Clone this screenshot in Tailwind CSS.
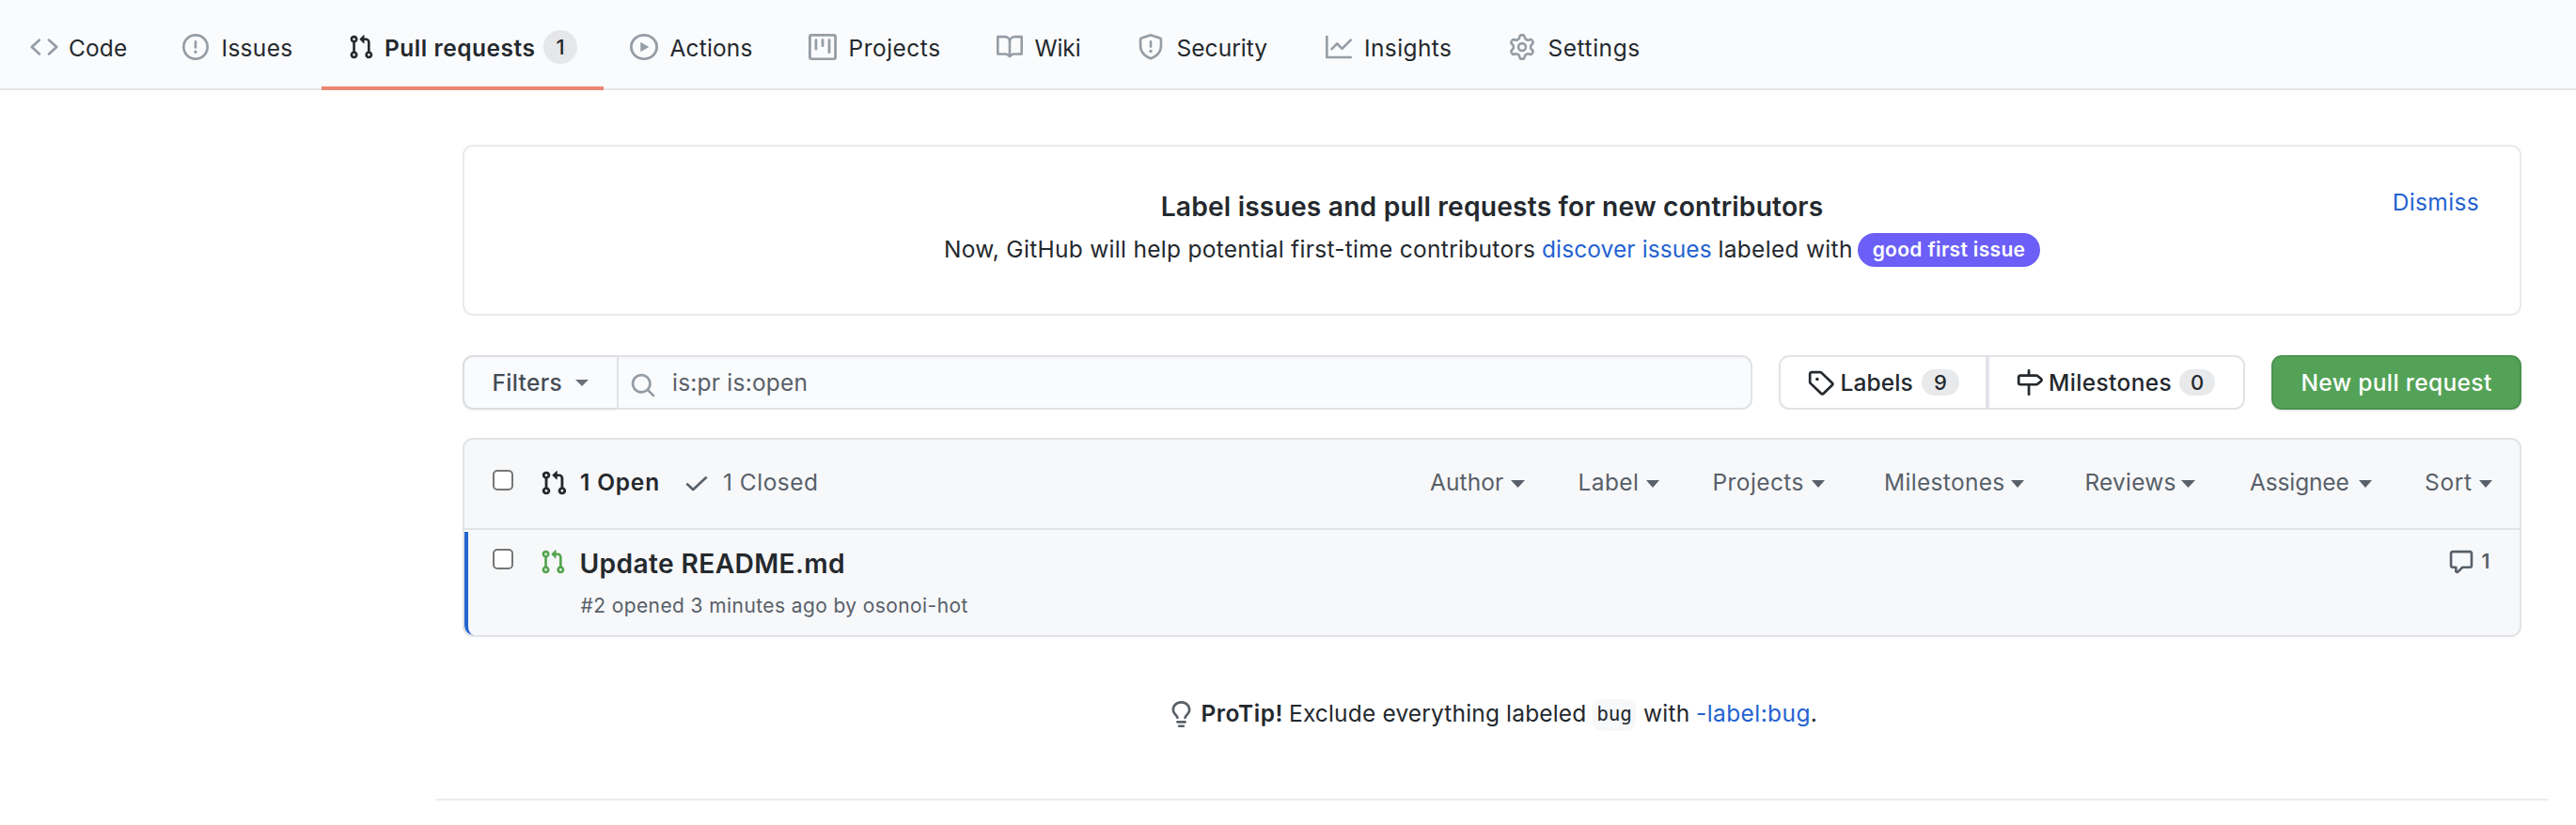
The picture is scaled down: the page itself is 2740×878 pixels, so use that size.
<!DOCTYPE html>
<html lang="en">
<head>
<meta charset="utf-8">
<title>Pull requests</title>
<script src="https://cdn.jsdelivr.net/npm/@tailwindcss/browser@4"></script>
</head>
<body class="bg-white text-[#24292e] font-['Inter',sans-serif] text-[24.5px] leading-[30px] whitespace-nowrap overflow-hidden">

<!-- Shared icon shapes -->
<svg class="hidden">
  <symbol id="pr" viewBox="0 0 16 16" preserveAspectRatio="none"><path fill-rule="evenodd" d="M7.177 3.073L9.573.677A.25.25 0 0110 .854v4.792a.25.25 0 01-.427.177L7.177 3.427a.25.25 0 010-.354zM3.75 2.5a.75.75 0 100 1.5.75.75 0 000-1.5zm-2.25.75a2.25 2.25 0 113 2.122v5.256a2.251 2.251 0 11-1.5 0V5.372A2.25 2.25 0 011.5 3.25zM11 2.5h-1V4h1a1 1 0 011 1v5.628a2.251 2.251 0 101.5 0V5A2.5 2.5 0 0011 2.5zm1 10.25a.75.75 0 111.5 0 .75.75 0 01-1.5 0zM3.75 12a.75.75 0 100 1.5.75.75 0 000-1.5z"/></symbol>
  <symbol id="caret" viewBox="0 0 14 8" preserveAspectRatio="none"><path d="M0 0h14L7 8z"/></symbol>
</svg>

<header class="h-24 bg-[#fafbfd] border-b-2 border-[#e4e6e9]">
  <nav class="flex items-start h-24">
    <a class="flex items-start pt-9 pl-8 w-[193.5px]">
      <svg class="w-[30px] h-7 shrink-0 fill-[#959da5]" viewBox="0 0 16 16" preserveAspectRatio="none"><path d="M4.72 3.22a.75.75 0 011.06 1.06L2.06 8l3.72 3.72a.75.75 0 11-1.06 1.06L.47 8.53a.75.75 0 010-1.06l4.25-4.25zm6.56 0a.75.75 0 10-1.06 1.06L13.94 8l-3.72 3.72a.75.75 0 101.06 1.06l4.25-4.25a.75.75 0 000-1.06l-4.25-4.25z"/></svg>
      <span class="ml-[11px] tracking-[0.1px]">Code</span>
    </a>
    <a class="flex items-start pt-9 w-[148.5px]">
      <svg class="size-7 shrink-0 fill-[#959da5]" viewBox="0 0 16 16"><path fill-rule="evenodd" d="M8 1.5a6.5 6.5 0 100 13 6.5 6.5 0 000-13zM0 8a8 8 0 1116 0A8 8 0 010 8zm9 3a1 1 0 11-2 0 1 1 0 012 0zm-.25-6.25a.75.75 0 00-1.5 0v3.5a.75.75 0 001.5 0v-3.5z"/></svg>
      <span class="ml-[14px] tracking-[0.3px]">Issues</span>
    </a>
    <a class="flex items-start pt-9 h-24 pl-7 w-[300px] border-b-4 border-[#ec8672]">
      <svg class="size-7 shrink-0 fill-[#24292e]"><use href="#pr"/></svg>
      <span class="ml-[11px] w-[169px] font-semibold tracking-[0.53px]">Pull requests</span>
      <span class="-mt-1 size-9 rounded-full bg-[#e6e7ea] flex items-center justify-center text-[22px] font-medium">1</span>
    </a>
    <a class="flex items-start pt-9 pl-7 w-[218px]">
      <svg class="w-[30px] h-7 shrink-0 fill-[#959da5]" viewBox="0 0 16 16" preserveAspectRatio="none"><path fill-rule="evenodd" d="M1.5 8a6.5 6.5 0 1113 0 6.5 6.5 0 01-13 0zM8 0a8 8 0 100 16A8 8 0 008 0zM6.379 5.227A.25.25 0 006 5.442v5.117a.25.25 0 00.379.214l4.264-2.559a.25.25 0 000-.428L6.379 5.227z"/></svg>
      <span class="ml-[12.5px] tracking-[0.16px]">Actions</span>
    </a>
    <a class="flex items-start pt-9 w-[200px]">
      <svg class="w-[30px] h-7 shrink-0 fill-[#959da5]" viewBox="0 0 16 16" preserveAspectRatio="none"><path fill-rule="evenodd" d="M1.75 0A1.75 1.75 0 000 1.75v12.5C0 15.216.784 16 1.75 16h12.5A1.75 1.75 0 0016 14.25V1.75A1.75 1.75 0 0014.25 0H1.75zM1.5 1.75a.25.25 0 01.25-.25h12.5a.25.25 0 01.25.25v12.5a.25.25 0 01-.25.25H1.75a.25.25 0 01-.25-.25V1.75zM11.75 3a.75.75 0 00-.75.75v7.5a.75.75 0 001.5 0v-7.5a.75.75 0 00-.75-.75zm-8.25.75a.75.75 0 011.5 0v5.5a.75.75 0 01-1.5 0v-5.5zM8 3a.75.75 0 00-.75.75v3.5a.75.75 0 001.5 0v-3.5A.75.75 0 008 3z"/></svg>
      <span class="ml-[12.5px] tracking-[0.5px]">Projects</span>
    </a>
    <a class="flex items-start pt-9 w-[150px]">
      <svg class="size-7 shrink-0 fill-[#959da5]" viewBox="0 0 16 16"><path fill-rule="evenodd" d="M0 1.75A.75.75 0 01.75 1h4.253c1.227 0 2.317.59 3 1.501A3.744 3.744 0 0111.006 1h4.245a.75.75 0 01.75.75v10.5a.75.75 0 01-.75.75h-4.507a2.25 2.25 0 00-1.591.659l-.622.621a.75.75 0 01-1.06 0l-.622-.621A2.25 2.25 0 005.258 13H.75a.75.75 0 01-.75-.75V1.75zm8.755 3a2.25 2.25 0 012.25-2.25H14.5v9h-3.757c-.71 0-1.4.201-1.992.572l.004-7.322zm-1.504 7.324l.004-5.073-.002-2.253A2.25 2.25 0 005.003 2.5H1.5v9h3.757a3.75 3.75 0 011.994.574z"/></svg>
      <span class="ml-[12.5px] tracking-[-0.1px]">Wiki</span>
    </a>
    <a class="flex items-start pt-9 w-[200px]">
      <svg class="size-7 shrink-0 fill-[#959da5]" viewBox="0 0 16 16"><path fill-rule="evenodd" d="M7.467.133a1.75 1.75 0 011.066 0l5.25 1.68A1.75 1.75 0 0115 3.48V7c0 1.566-.32 3.182-1.303 4.682-.983 1.498-2.585 2.813-5.032 3.855a1.7 1.7 0 01-1.33 0c-2.447-1.042-4.049-2.357-5.032-3.855C1.32 10.182 1 8.566 1 7V3.48a1.75 1.75 0 011.217-1.667l5.25-1.68zm.61 1.429a.25.25 0 00-.153 0l-5.25 1.68a.25.25 0 00-.174.238V7c0 1.358.275 2.666 1.057 3.86.784 1.194 2.121 2.34 4.366 3.297a.2.2 0 00.154 0c2.245-.956 3.582-2.104 4.366-3.298C13.225 9.666 13.5 8.36 13.5 7V3.48a.25.25 0 00-.174-.237l-5.25-1.68zM9 10.5a1 1 0 11-2 0 1 1 0 012 0zm-.25-5.75a.75.75 0 10-1.5 0v3a.75.75 0 001.5 0v-3z"/></svg>
      <span class="ml-[13.5px] tracking-[0.05px]">Security</span>
    </a>
    <a class="flex items-start pt-9 w-[195px]">
      <svg class="size-7 shrink-0 fill-[#959da5]" viewBox="0 0 16 16"><path d="M1.5 1.75a.75.75 0 00-1.5 0v12.5c0 .414.336.75.75.75h14.5a.75.75 0 000-1.5H1.5V1.75zm14.28 2.53a.75.75 0 00-1.06-1.06L10 7.94 7.53 5.47a.75.75 0 00-1.06 0L3.22 8.72a.75.75 0 001.06 1.06L7 7.06l2.47 2.47a.75.75 0 001.06 0l5.25-5.25z"/></svg>
      <span class="ml-[13px] tracking-[0.4px]">Insights</span>
    </a>
    <a class="flex items-start pt-9">
      <svg class="size-7 shrink-0 fill-[#959da5]" viewBox="0 0 16 16"><path fill-rule="evenodd" d="M7.429 1.525a6.593 6.593 0 011.142 0c.036.003.108.036.137.146l.289 1.105c.147.56.55.967.997 1.189.174.086.341.183.501.29.417.278.97.423 1.53.27l1.102-.303c.11-.03.175.016.195.046.219.31.41.641.573.989.014.031.022.11-.059.19l-.815.806c-.411.406-.562.957-.53 1.456a4.588 4.588 0 010 .582c-.032.499.119 1.05.53 1.456l.815.806c.08.08.073.159.059.19a6.494 6.494 0 01-.573.99c-.02.029-.086.074-.195.045l-1.103-.303c-.559-.153-1.112-.008-1.529.27-.16.107-.327.204-.5.29-.449.222-.851.628-.998 1.189l-.289 1.105c-.029.11-.101.143-.137.146a6.613 6.613 0 01-1.142 0c-.036-.003-.108-.037-.137-.146l-.289-1.105c-.147-.56-.55-.967-.997-1.189a4.502 4.502 0 01-.501-.29c-.417-.278-.97-.423-1.53-.27l-1.102.303c-.11.03-.175-.016-.195-.046a6.492 6.492 0 01-.573-.989c-.014-.031-.022-.11.059-.19l.815-.806c.411-.406.562-.957.53-1.456a4.587 4.587 0 010-.582c.032-.499-.119-1.05-.53-1.456l-.815-.806c-.08-.08-.073-.159-.059-.19a6.44 6.44 0 01.573-.99c.02-.029.086-.075.195-.045l1.103.303c.559.153 1.112.008 1.529-.27.16-.107.327-.204.5-.29.449-.222.851-.628.998-1.189l.289-1.105c.029-.11.101-.143.137-.146zM8 0c-.236 0-.47.01-.701.03-.743.065-1.29.615-1.458 1.261l-.29 1.106c-.017.066-.078.158-.211.224a5.994 5.994 0 00-.668.386c-.123.082-.233.09-.3.071L3.27 2.776c-.644-.177-1.392.02-1.82.63a7.977 7.977 0 00-.704 1.217c-.315.675-.111 1.422.363 1.891l.815.806c.05.048.098.147.088.294a6.084 6.084 0 000 .772c.01.147-.038.246-.088.294l-.815.806c-.474.469-.678 1.216-.363 1.891.2.428.436.835.704 1.218.428.609 1.176.806 1.82.63l1.103-.303c.066-.019.176-.011.299.071.213.143.436.272.668.386.133.066.194.158.212.224l.289 1.106c.169.646.715 1.196 1.458 1.26a8.094 8.094 0 001.402 0c.743-.064 1.29-.614 1.458-1.26l.29-1.106c.017-.066.078-.158.211-.224a5.98 5.98 0 00.668-.386c.123-.082.233-.09.3-.071l1.102.302c.644.177 1.392-.02 1.82-.63.268-.382.505-.789.704-1.217.315-.675.111-1.422-.364-1.891l-.814-.806c-.05-.048-.098-.147-.088-.294a6.1 6.1 0 000-.772c-.01-.147.039-.246.088-.294l.814-.806c.475-.469.679-1.216.364-1.891a7.992 7.992 0 00-.704-1.218c-.428-.609-1.176-.806-1.82-.63l-1.103.303c-.066.019-.176.011-.299-.071a5.991 5.991 0 00-.668-.386c-.133-.066-.194-.158-.212-.224L10.16 1.29C9.99.645 9.444.095 8.701.031A8.094 8.094 0 008 0zm1.5 8a1.5 1.5 0 11-3 0 1.5 1.5 0 013 0zM11 8a3 3 0 11-6 0 3 3 0 016 0z"/></svg>
      <span class="ml-[13.5px] tracking-[0.55px]">Settings</span>
    </a>
  </nav>
</header>

<main class="ml-[492px] w-[2190px] pt-[58px]">
  <!-- Contributor banner -->
  <section class="relative h-[182px] border-2 border-[#eaebef] rounded-[11px] pt-[46px] flex flex-col items-center">
    <h3 class="text-[28.2px] leading-9 font-semibold tracking-[0.19px]">Label issues and pull requests for new contributors</h3>
    <p class="mt-[9px] flex items-start leading-9">
      <span class="w-[636px] tracking-[0.29px]">Now, GitHub will help potential first-time contributors</span>
      <a class="w-[187.5px] text-[#2563d0] tracking-[0.1px]">discover issues</a>
      <span class="w-[148.5px] tracking-[0.3px]">labeled with</span>
      <span class="mt-px h-9 w-[194px] rounded-full bg-[#6b5ff7] text-white text-[21px] font-semibold tracking-[0.34px] text-center">good first issue</span>
    </p>
    <a class="absolute top-11 right-[43px] text-[#2563d0] tracking-[0.35px]">Dismiss</a>
  </section>

  <!-- Search and actions -->
  <section class="flex mt-[42px] h-[58px]">
    <button class="flex items-center w-[164px] pl-[29.5px] rounded-l-[11px] border-2 border-r-0 border-[#dcdde0] bg-[#fafbfd] text-[#444d56] font-medium shadow-[0_2px_0_rgba(27,31,35,0.03)]">
      <span class="w-[88.5px] text-left tracking-[0.3px]">Filters</span>
      <svg class="w-[14px] h-[7px] mt-px fill-[#6a7179]"><use href="#caret"/></svg>
    </button>
    <div class="flex items-center w-[1208px] pl-3 rounded-r-[11px] border-2 border-[#e1e3e8] bg-[#fafbfd] text-[#586069] shadow-[inset_0_2px_0_rgba(225,228,232,0.2)]">
      <svg class="size-7 shrink-0 mt-[5px] fill-[#959da5]" viewBox="0 0 16 16"><path fill-rule="evenodd" d="M11.5 7a4.499 4.499 0 11-8.998 0A4.499 4.499 0 0111.5 7zm-.82 4.74a6 6 0 111.06-1.06l3.04 3.04a.75.75 0 11-1.06 1.06l-3.04-3.04z"/></svg>
      <span class="ml-[17px] tracking-[0.22px]">is:pr is:open</span>
    </div>
    <div class="flex ml-7 w-[496px] rounded-[11px] border-2 border-[#e2e3e8] font-medium">
      <a class="flex items-center w-[222px] pl-[28px] border-r-4 border-[#e2e3e8]">
        <svg class="w-[29px] h-7 shrink-0" viewBox="0 0 16 16" preserveAspectRatio="none" fill="#24292e"><path fill-rule="evenodd" d="M2.5 7.775V2.75a.25.25 0 01.25-.25h5.025a.25.25 0 01.177.073l6.25 6.25a.25.25 0 010 .354l-5.025 5.025a.25.25 0 01-.354 0l-6.25-6.25a.25.25 0 01-.073-.177zm-1.5 0V2.75C1 1.784 1.784 1 2.75 1h5.025c.464 0 .91.184 1.238.513l6.25 6.25a1.75 1.75 0 010 2.474l-5.026 5.026a1.75 1.75 0 01-2.474 0l-6.25-6.25A1.75 1.75 0 011 7.775zM6 5a1 1 0 100 2 1 1 0 000-2z"/></svg>
        <span class="ml-[6.5px] w-[86.5px] tracking-[0.1px]">Labels</span>
        <span class="w-10 h-7 rounded-full bg-[#e8e9eb] text-[22px] leading-7 text-center">9</span>
      </a>
      <a class="flex items-center pl-[28px]">
        <svg class="w-[29px] h-7 shrink-0" viewBox="0 0 16 16" preserveAspectRatio="none" fill="#24292e"><path fill-rule="evenodd" d="M7.75 0a.75.75 0 01.75.75V3h3.634c.414 0 .814.147 1.13.414l2.07 1.75a1.75 1.75 0 010 2.672l-2.07 1.75a1.75 1.75 0 01-1.13.414H8.5v5.25a.75.75 0 11-1.5 0V10H2.75A1.75 1.75 0 011 8.25v-3.5C1 3.784 1.784 3 2.75 3H7V.75A.75.75 0 017.75 0zm0 8.5h4.384a.25.25 0 00.161-.06l2.07-1.75a.25.25 0 000-.38l-2.07-1.75a.25.25 0 00-.161-.06H2.75a.25.25 0 00-.25.25v3.5c0 .138.112.25.25.25h5z"/></svg>
        <span class="ml-1.5 w-[139px] tracking-[0.35px]">Milestones</span>
        <span class="w-[38px] h-7 rounded-full bg-[#e8e9eb] text-[22px] leading-7 text-center">0</span>
      </a>
    </div>
    <button class="ml-7 w-[266px] rounded-[11px] border-2 border-[#4b924f] bg-[#54a257] text-white font-medium tracking-[0.37px] shadow-[0_2px_0_rgba(27,31,35,0.08)]">New pull request</button>
  </section>

  <!-- Pull request list -->
  <section class="mt-[30px] h-[212px] border-2 border-[#e1e3e6] rounded-[11px] bg-[#f7f8fa] overflow-hidden">
    <div class="flex items-start h-24 pt-8 border-b-2 border-[#e1e3e6] text-[#586069]">
      <span class="ml-[30px] size-[22px] rounded-[5px] border-2 border-[#767676] bg-white"></span>
      <svg class="w-[30px] h-7 ml-[28px] shrink-0 fill-[#24292e]"><use href="#pr"/></svg>
      <a class="ml-[13px] -mt-[2px] w-[109px] font-semibold text-[#24292e] tracking-[0.8px]">1 Open</a>
      <svg class="w-[30px] h-7 shrink-0 fill-[#586069]" viewBox="0 0 16 16" preserveAspectRatio="none"><path d="M13.78 4.22a.75.75 0 010 1.06l-7.25 7.25a.75.75 0 01-1.06 0L2.22 9.28a.75.75 0 011.06-1.06L6 10.94l6.72-6.72a.75.75 0 011.06 0z"/></svg>
      <a class="ml-[13px] -mt-[2px] w-[752px] tracking-[0.49px]">1 Closed</a>
      <div class="flex items-center -mt-[2px]">
        <a class="flex items-center w-[157.5px]"><span class="w-[86px] tracking-[0.08px]">Author</span><svg class="w-[15px] h-2 mt-1 fill-[#586069]"><use href="#caret"/></svg></a>
        <a class="flex items-center w-[143px]"><span class="w-[72px] tracking-[0.4px]">Label</span><svg class="w-[14px] h-2 mt-1 fill-[#586069]"><use href="#caret"/></svg></a>
        <a class="flex items-center w-[182.5px]"><span class="w-[105px] tracking-[0.41px]">Projects</span><svg class="w-[14px] h-2 mt-1 fill-[#586069]"><use href="#caret"/></svg></a>
        <a class="flex items-center w-[213.5px]"><span class="w-[134.5px] tracking-[0.32px]">Milestones</span><svg class="w-[14px] h-2 mt-1 fill-[#586069]"><use href="#caret"/></svg></a>
        <a class="flex items-center w-[175.5px]"><span class="w-[102.5px] tracking-[0.2px]">Reviews</span><svg class="w-[15px] h-2 mt-1 fill-[#586069]"><use href="#caret"/></svg></a>
        <a class="flex items-center w-[186px]"><span class="w-[115.5px] tracking-[-0.14px]">Assignee</span><svg class="w-[14px] h-2 mt-1 fill-[#586069]"><use href="#caret"/></svg></a>
        <a class="flex items-center"><span class="w-[57.5px] tracking-[0.66px]">Sort</span><svg class="w-[14px] h-2 mt-1 fill-[#586069]"><use href="#caret"/></svg></a>
      </div>
    </div>
    <div class="mt-0.5 flex items-start h-[110px] pt-[18px] border-l-4 border-[#2665cf] rounded-bl-[10px]">
      <span class="ml-[26px] size-[22px] rounded-[5px] border-2 border-[#767676] bg-white"></span>
      <svg class="size-7 ml-[28px] shrink-0 fill-[#54a34e]"><use href="#pr"/></svg>
      <div class="-mt-[2px] ml-[14.5px] w-[1987px]">
        <h4 class="text-[28.2px] leading-9 font-semibold tracking-[0.35px]">Update README.md</h4>
        <p class="mt-[13px] ml-px text-[21px] leading-7 text-[#586069] tracking-[0.4px]">#2 opened 3 minutes ago by osonoi-hot</p>
      </div>
      <svg class="size-7 shrink-0 fill-[#586069]" viewBox="0 0 16 16"><path fill-rule="evenodd" d="M2.75 2.5a.25.25 0 00-.25.25v7.5c0 .138.112.25.25.25h2a.75.75 0 01.75.75v2.19l2.72-2.72a.75.75 0 01.53-.22h4.5a.25.25 0 00.25-.25v-7.5a.25.25 0 00-.25-.25H2.75zM1 2.75C1 1.784 1.784 1 2.75 1h10.5c.966 0 1.75.784 1.75 1.75v7.5A1.75 1.75 0 0113.25 12H9.06l-2.573 2.573A1.457 1.457 0 014 13.543V12H2.75A1.75 1.75 0 011 10.25v-7.5z"/></svg>
      <span class="ml-2 text-[21px] leading-7 font-semibold text-[#586069]">1</span>
    </div>
  </section>

  <!-- Tip -->
  <section class="mt-[66px] flex items-start ml-[749.5px]">
    <svg class="w-[29px] h-7 mt-0.5 shrink-0 fill-[#586069]" viewBox="0 0 16 16" preserveAspectRatio="none"><path fill-rule="evenodd" d="M8 1.5c-2.363 0-4 1.69-4 3.75 0 .984.424 1.625.984 2.304l.214.253c.223.264.47.556.673.848.284.411.537.896.621 1.49a.75.75 0 01-1.484.211c-.04-.282-.163-.547-.37-.847a8.695 8.695 0 00-.542-.68c-.084-.1-.173-.205-.268-.32C3.201 7.75 2.5 6.766 2.5 5.25 2.5 2.31 4.863 0 8 0s5.5 2.31 5.5 5.25c0 1.516-.701 2.5-1.328 3.259-.095.115-.184.22-.268.319-.207.245-.383.453-.541.681-.208.3-.33.565-.37.847a.75.75 0 01-1.485-.212c.084-.593.337-1.078.621-1.489.203-.292.45-.584.673-.848.075-.088.147-.173.213-.253.561-.679.985-1.32.985-2.304 0-2.06-1.637-3.75-4-3.75zM6 15.25a.75.75 0 01.75-.75h2.5a.75.75 0 010 1.5h-2.5a.75.75 0 01-.75-.75zM5.75 12a.75.75 0 000 1.5h4.5a.75.75 0 000-1.5h-4.5z"/></svg>
    <strong class="ml-[7px] w-[93.5px] font-semibold tracking-[0.52px]">ProTip!</strong>
    <span class="w-[323px] tracking-[0.16px]">Exclude everything labeled</span>
    <code class="w-[46px] h-[34px] rounded-[10px] bg-[#f6f8fa] text-center leading-[33px] text-[21px] tracking-[-0.2px] font-['DejaVu_Sans_Mono',monospace]">bug</code>
    <span class="ml-2 w-[56px] tracking-[0.27px]">with</span>
    <a class="text-[#2563d0] tracking-[0.41px]">-label:bug</a><span>.</span>
  </section>
</main>

<footer class="mt-[72px] ml-[464px] w-[2246px] border-t-2 border-[#eaebef]"></footer>
</body>
</html>
